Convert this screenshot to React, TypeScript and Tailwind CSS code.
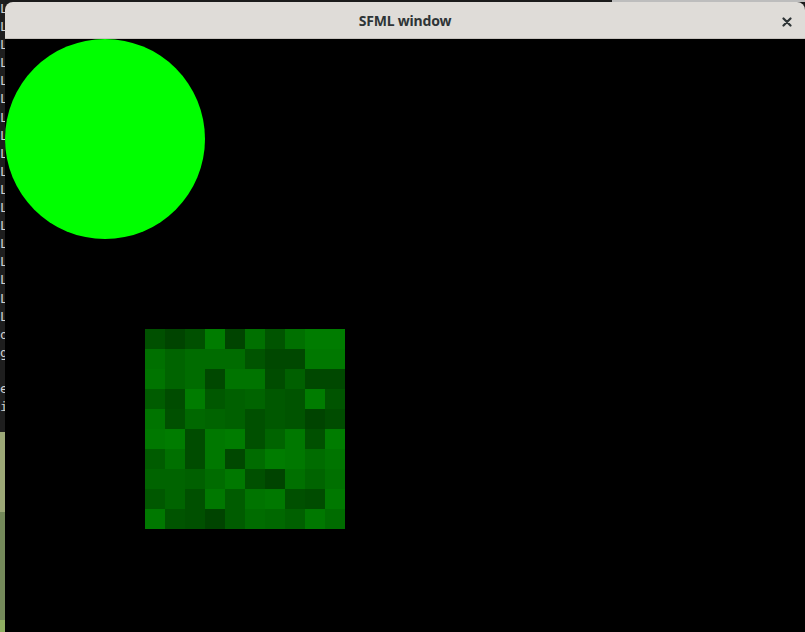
import React from 'react';

// texture colours read off the 10x10 sprite, row by row
const tiles = [
  ['#005000', '#004400', '#005000', '#007c00', '#004400', '#007000', '#005400', '#007000', '#007c00', '#007c00'],
  ['#007000', '#006400', '#006c00', '#006c00', '#006c00', '#005400', '#004800', '#004800', '#007800', '#007800'],
  ['#007400', '#006400', '#006c00', '#004800', '#007400', '#007400', '#004c00', '#006000', '#004800', '#004800'],
  ['#005c00', '#004c00', '#007c00', '#005800', '#006000', '#006400', '#005800', '#005400', '#007c00', '#005400'],
  ['#007400', '#005000', '#006800', '#006400', '#006000', '#005000', '#005800', '#005400', '#004400', '#004c00'],
  ['#007800', '#007c00', '#004c00', '#007800', '#007c00', '#005000', '#006400', '#007800', '#005000', '#007c00'],
  ['#005c00', '#007000', '#004c00', '#007800', '#004800', '#006c00', '#007c00', '#007800', '#006c00', '#007400'],
  ['#006400', '#006400', '#006000', '#006c00', '#007800', '#005000', '#004400', '#007000', '#006400', '#007000'],
  ['#005800', '#006400', '#005000', '#007800', '#005c00', '#007400', '#007800', '#005000', '#004c00', '#007800'],
  ['#007800', '#005400', '#005000', '#004400', '#005c00', '#006c00', '#006800', '#006000', '#007800', '#006c00'],
];

// clipped terminal lines peeking out from behind the window
const termLines = ['L', 'L', 'L', 'L', 'L', 'L', 'L', 'L', 'L', 'L', 'L', 'L', 'L', 'L', 'L', 'L', 'L', 'L', 'o', 'g', '', 'e', 'i'];

export default function App() {
  return (
    <div className="flex w-[805px] h-[632px] overflow-hidden bg-[#1b1b1b]">
      {/* desktop behind the window: terminal edge + wallpaper */}
      <div className="flex flex-col w-[5px] shrink-0 overflow-hidden">
        <div className="flex flex-col h-[432px] bg-[#1e1e1e] font-['DejaVu_Sans_Mono',monospace] text-[13px] leading-[18.1px] text-[#d0d0d0]">
          {termLines.map((l, i) => (
            <span key={i} className="h-[18.1px] block whitespace-pre">{l || ' '}</span>
          ))}
        </div>
        <div className="h-[80px] bg-[#9ca877]" />
        <div className="h-[108px] bg-[#74895a]" />
        <div className="flex-1 bg-[#8fae62]" />
      </div>

      <div className="flex flex-col w-[800px]">
        <div className="flex h-[2px] shrink-0">
          <div className="w-[607px] bg-[#1b1b1b]" />
          <div className="flex-1 bg-[#bdbdbd]" />
        </div>

        {/* SFML window */}
        <div className="flex flex-col flex-1 rounded-t-[8px] overflow-hidden">
          <div className="relative flex items-center justify-center h-[37px] shrink-0 bg-[#dfdcd8] border-b border-[#c6c2bd]">
            <span className="font-['Noto_Sans',sans-serif] font-bold text-[14px] text-[#2e3436] tracking-[-0.2px]">
              SFML window
            </span>
            <svg className="absolute right-[13px] top-[15px]" width="10" height="10" viewBox="0 0 10 10">
              <path d="M1.5 1.5 L8.5 8.5 M8.5 1.5 L1.5 8.5" stroke="#2e3436" strokeWidth="2.2" strokeLinecap="round" />
            </svg>
          </div>

          {/* render target: shapes sit at their own coordinates */}
          <div className="relative flex-1 bg-black">
            <div className="absolute left-0 top-0 w-[200px] h-[200px] rounded-full bg-[#00ff00]" />
            <div className="absolute left-[140px] top-[290px] grid grid-cols-10 w-[200px] h-[200px]">
              {tiles.flat().map((c, i) => (
                <div key={i} className="w-[20px] h-[20px]" style={{ backgroundColor: c }} />
              ))}
            </div>
          </div>
        </div>
      </div>
    </div>
  );
}
